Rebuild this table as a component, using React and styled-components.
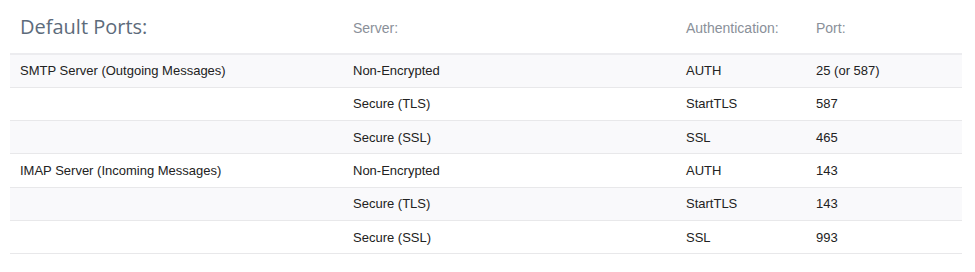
import React from 'react'
import styled, { createGlobalStyle } from 'styled-components'

const GlobalStyle = createGlobalStyle`
  body {
    margin: 0;
    background: #ffffff;
    font-family: "Liberation Sans", Arial, sans-serif;
  }
`

const Wrap = styled.div`
  padding: 0 13px 0 10px;
`

const Table = styled.table`
  width: 952px;
  border-collapse: collapse;
  table-layout: fixed;
`

const HeadCell = styled.th`
  text-align: left;
  font-weight: 400;
  font-size: 14px;
  color: #8a9099;
  height: 54px;
  padding: 3px 10px 0;
  border-bottom: 2px solid #ececef;
  vertical-align: middle;
  box-sizing: border-box;
`

const Title = styled(HeadCell)`
  font-family: "Open Sans", "Noto Sans", sans-serif;
  font-size: 20px;
  color: #5d6b7b;
  padding-top: 0;
  padding-bottom: 1px;
`

const Row = styled.tr`
  background: ${(p) => (p.$striped ? '#f9f9fb' : '#ffffff')};
`

const Cell = styled.td`
  font-size: 13px;
  color: #222;
  height: 33.33px;
  padding: 0 10px;
  border-bottom: 1px solid #e8e8ea;
  vertical-align: middle;
  box-sizing: border-box;
`

const rows = [
  ['SMTP Server (Outgoing Messages)', 'Non-Encrypted', 'AUTH', '25 (or 587)'],
  ['', 'Secure (TLS)', 'StartTLS', '587'],
  ['', 'Secure (SSL)', 'SSL', '465'],
  ['IMAP Server (Incoming Messages)', 'Non-Encrypted', 'AUTH', '143'],
  ['', 'Secure (TLS)', 'StartTLS', '143'],
  ['', 'Secure (SSL)', 'SSL', '993'],
]

export default function App() {
  return (
    <>
      <GlobalStyle />
      <Wrap>
        <Table>
          <colgroup>
            <col style={{ width: 333 }} />
            <col style={{ width: 333 }} />
            <col style={{ width: 130 }} />
            <col style={{ width: 156 }} />
          </colgroup>
          <thead>
            <tr>
              <Title>Default Ports:</Title>
              <HeadCell>Server:</HeadCell>
              <HeadCell>Authentication:</HeadCell>
              <HeadCell>Port:</HeadCell>
            </tr>
          </thead>
          <tbody>
            {rows.map((r, i) => (
              <Row key={i} $striped={i % 2 === 0}>
                {r.map((c, j) => (
                  <Cell key={j}>{c}</Cell>
                ))}
              </Row>
            ))}
          </tbody>
        </Table>
      </Wrap>
    </>
  )
}
